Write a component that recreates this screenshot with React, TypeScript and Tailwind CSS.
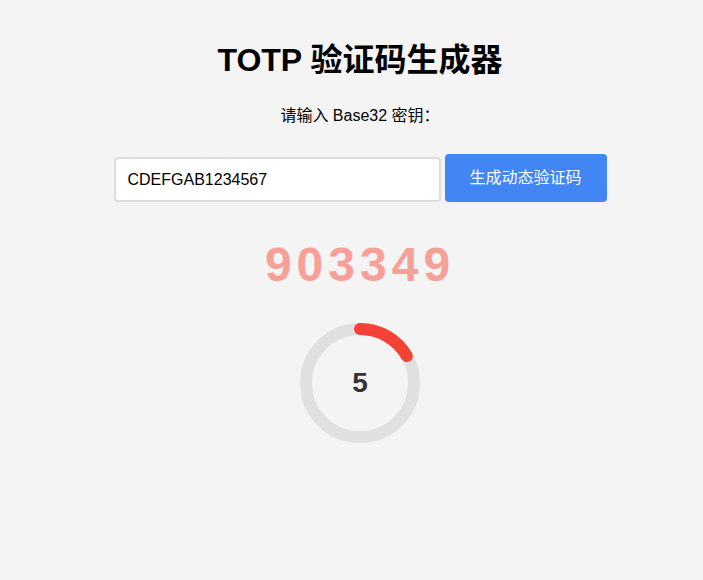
import { useState } from "react";

const font = { fontFamily: '"Liberation Sans", "Noto Sans CJK SC", Arial, sans-serif' };

const R = 54;
const C = 2 * Math.PI * R;

export default function App() {
  const [secret, setSecret] = useState("CDEFGAB1234567");
  const code = "903349";
  const remaining = 5;
  const period = 30;

  return (
    <div
      className="min-h-[580px] w-full bg-[#f4f4f4] pl-[17px] pt-10 flex flex-col items-center text-black"
      style={font}
    >
      <h1 className="text-[32px] leading-[40px] font-bold">TOTP 验证码生成器</h1>

      <p className="mt-[24px] text-[16px] leading-[24px]">请输入 Base32 密钥：</p>

      <div className="mt-[26px] flex items-end gap-[4px]">
        <input
          value={secret}
          onChange={(e) => setSecret(e.target.value)}
          className="w-[327px] h-[45px] border-2 border-[#dddddd] rounded-[4px] bg-white pl-3 text-[16px] text-black outline-none"
          style={font}
        />
        <button className="w-[162px] h-[48px] rounded-[4px] bg-[#4285f4] text-white text-[16px]">
          生成动态验证码
        </button>
      </div>

      {/* the code itself */}
      <div className="mt-[35px] text-[48px] leading-[56px] font-bold tracking-[5px] text-[#f7a098]">
        {code}
      </div>

      {/* countdown ring */}
      <div className="relative mt-[30px] w-[120px] h-[120px]">
        <svg width="120" height="120" viewBox="0 0 120 120">
          <circle cx="60" cy="60" r={R} fill="none" stroke="#e0e0e0" strokeWidth="12" />
          <circle
            cx="60"
            cy="60"
            r={R}
            fill="none"
            stroke="#f44336"
            strokeWidth="12"
            strokeLinecap="round"
            strokeDasharray={C}
            strokeDashoffset={C * (1 - remaining / period)}
            transform="rotate(-90 60 60)"
          />
        </svg>
        <div className="absolute inset-0 flex items-center justify-center text-[28px] font-bold text-[#333333]">
          {remaining}
        </div>
      </div>
    </div>
  );
}
